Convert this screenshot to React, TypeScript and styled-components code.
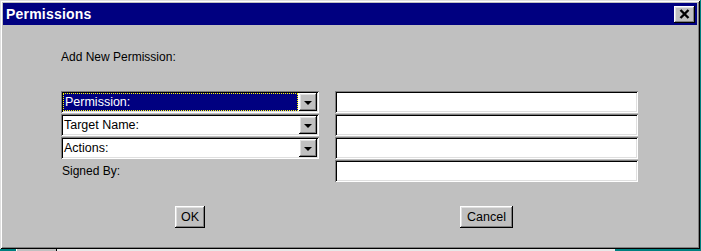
import React from 'react';
import styled, { createGlobalStyle } from 'styled-components';

const GlobalStyle = createGlobalStyle`
  html, body {
    margin: 0;
    padding: 0;
    background: #008080;
  }
  body {
    font-family: "Liberation Sans", Arial, sans-serif;
  }
`;

const raised = `
  box-shadow:
    inset -1px -1px #000000,
    inset 1px 1px #ffffff,
    inset -2px -2px #808080,
    inset 2px 2px #dfdfdf;
`;

const sunken = `
  box-shadow:
    inset 1px 1px #808080,
    inset -1px -1px #ffffff,
    inset 2px 2px #000000,
    inset -2px -2px #dfdfdf;
`;

const Desktop = styled.div`
  width: 701px;
  height: 251px;
  display: flex;
  flex-direction: column;
  background: #008080;
  overflow: hidden;
`;

const Window = styled.div`
  box-sizing: border-box;
  width: 700px;
  height: 249px;
  padding: 3px;
  background: #c0c0c0;
  display: flex;
  flex-direction: column;
  box-shadow:
    inset 1px 1px #dfdfdf,
    inset -1px -1px #000000,
    inset 2px 2px #ffffff,
    inset -2px -2px #808080;
`;

const TitleBar = styled.div`
  height: 22px;
  background: #000080;
  display: flex;
  align-items: center;
  justify-content: space-between;
  padding: 0 2px 0 3px;
`;

const Title = styled.span`
  color: #ffffff;
  font-weight: bold;
  font-size: 14px;
  letter-spacing: 0.2px;
`;

const CloseButton = styled.div`
  width: 21px;
  height: 17px;
  background: #c0c0c0;
  display: flex;
  align-items: center;
  justify-content: center;
  ${raised}
`;

const Content = styled.div`
  padding: 25px 0 0 58px;
`;

const Heading = styled.div`
  font-size: 12px;
  line-height: 14px;
  color: #000000;
  height: 14px;
`;

const FormGrid = styled.div`
  display: grid;
  grid-template-columns: 258px 303px;
  grid-auto-rows: 22px;
  column-gap: 16px;
  row-gap: 1px;
  margin-top: 27px;
`;

const Combo = styled.div`
  box-sizing: border-box;
  display: flex;
  align-items: stretch;
  padding: 2px;
  background: #ffffff;
  ${sunken}
`;

const ComboValue = styled.div<{ $selected?: boolean }>`
  flex: 1;
  display: flex;
  align-items: center;
  padding-left: ${({ $selected }) => ($selected ? '2px' : '1px')};
  font-size: 12.5px;
  color: ${({ $selected }) => ($selected ? '#ffffff' : '#000000')};
  background: ${({ $selected }) => ($selected ? '#000080' : '#ffffff')};
  outline: ${({ $selected }) => ($selected ? '1px dotted #ffff00' : 'none')};
  outline-offset: -1px;
  margin-right: 1px;
`;

const ArrowButton = styled.div`
  width: 18px;
  background: #c0c0c0;
  display: flex;
  align-items: center;
  justify-content: center;
  ${raised}
`;

const Arrow = styled.div`
  width: 0;
  height: 0;
  margin-top: 1px;
  border-left: 4px solid transparent;
  border-right: 4px solid transparent;
  border-top: 4px solid #000000;
`;

const TextField = styled.div`
  box-sizing: border-box;
  background: #ffffff;
  ${sunken}
`;

const Label = styled.div`
  display: flex;
  align-items: center;
  padding-left: 1px;
  font-size: 12px;
  color: #000000;
`;

const ButtonRow = styled.div`
  display: grid;
  grid-template-columns: 258px 303px;
  column-gap: 16px;
  justify-items: center;
  margin-top: 24px;
`;

const PushButton = styled.div<{ $width: number }>`
  box-sizing: border-box;
  width: ${({ $width }) => $width}px;
  height: 22px;
  display: flex;
  align-items: center;
  justify-content: center;
  font-size: 12.5px;
  color: #000000;
  background: #c0c0c0;
  ${raised}
`;

const BottomStrip = styled.div`
  height: 2px;
  display: flex;
`;

const StripPiece = styled.div<{ $width?: number; $color: string }>`
  width: ${({ $width }) => ($width ? `${$width}px` : 'auto')};
  flex: ${({ $width }) => ($width ? 'none' : '1')};
  background: ${({ $color }) => $color};
`;

const TaskButton = styled.div`
  width: 39px;
  background: #c0c0c0;
  border-left: 1px solid #ffffff;
  border-right: 1px solid #000000;
`;

const combos = [
  { label: 'Permission:', selected: true },
  { label: 'Target Name:', selected: false },
  { label: 'Actions:', selected: false },
];

export default function App() {
  return (
    <>
      <GlobalStyle />
      <Desktop>
        <Window>
          <TitleBar>
            <Title>Permissions</Title>
            <CloseButton>
              <svg width="11" height="10" viewBox="0 0 11 10">
                <path d="M1.5 1 L9.5 9 M9.5 1 L1.5 9" stroke="#000" strokeWidth="2.4" />
              </svg>
            </CloseButton>
          </TitleBar>
          <Content>
            <Heading>Add New Permission:</Heading>
            <FormGrid>
              {combos.map((c) => (
                <React.Fragment key={c.label}>
                  <Combo>
                    <ComboValue $selected={c.selected}>{c.label}</ComboValue>
                    <ArrowButton>
                      <Arrow />
                    </ArrowButton>
                  </Combo>
                  <TextField />
                </React.Fragment>
              ))}
              <Label>Signed By:</Label>
              <TextField />
            </FormGrid>
            <ButtonRow>
              <PushButton $width={30}>OK</PushButton>
              <PushButton $width={53}>Cancel</PushButton>
            </ButtonRow>
          </Content>
        </Window>
        <BottomStrip>
          <StripPiece $width={16} $color="#008080" />
          <TaskButton />
          <StripPiece $color="#e8e8e8" />
          <StripPiece $width={86} $color="#008080" />
        </BottomStrip>
      </Desktop>
    </>
  );
}
